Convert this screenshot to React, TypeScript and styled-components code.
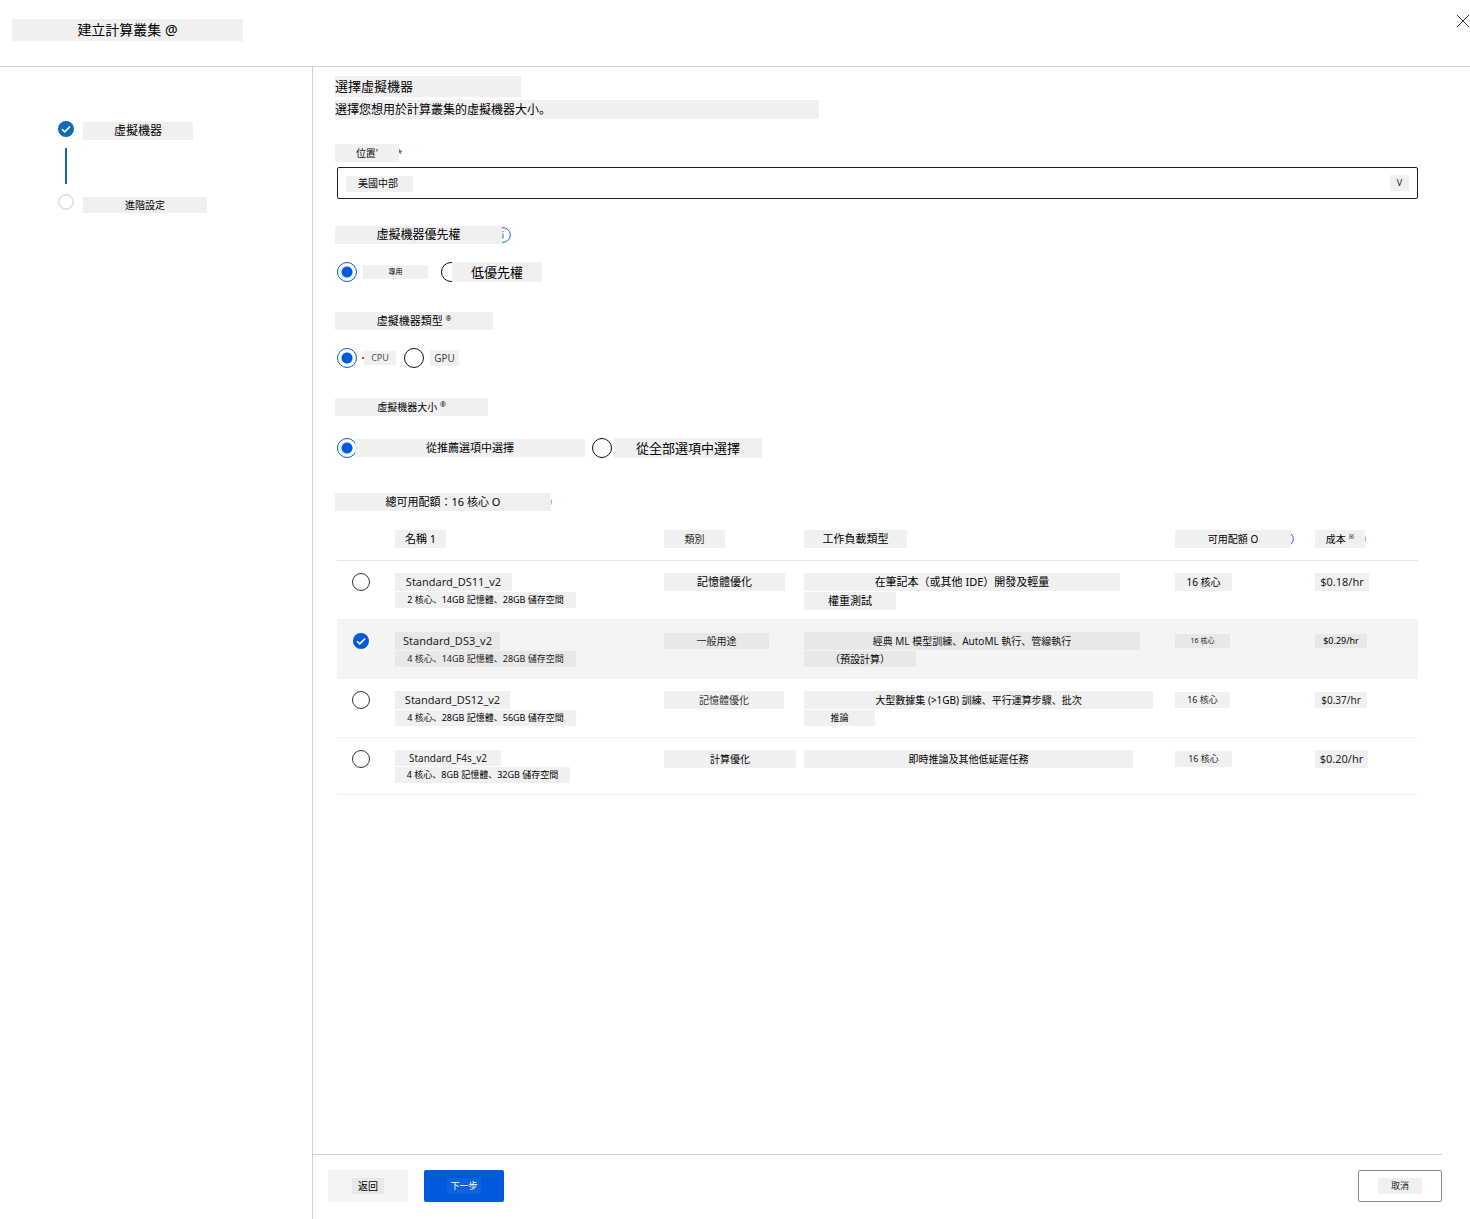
import React, { useState } from "react";
import styled, { createGlobalStyle } from "styled-components";

const Global = createGlobalStyle`
  *, *::before, *::after { box-sizing: border-box; }
  body {
    margin: 0;
    background: #fff;
    color: #000;
    font-family: "Noto Sans", "Noto Sans CJK JP", "Noto Sans CJK TC", sans-serif;
    font-size: 11px;
  }
  h1, h2, p { margin: 0; font-weight: 400; }
`;

const blue = "#005bdc";

const Page = styled.div`
  display: flex;
  flex-direction: column;
  min-height: 100vh;
`;

const Header = styled.header`
  display: flex;
  justify-content: space-between;
  align-items: flex-start;
  height: 67px;
  padding: 0 1px 0 12px;
  border-bottom: 1px solid #d2d2d2;
`;

const HeaderTitle = styled.h1`
  margin: 19px 0 0;
`;

const CloseButton = styled.button`
  display: flex;
  margin: 15px 0 0;
  padding: 0;
  border: 0;
  background: none;
  cursor: pointer;
`;

const Body = styled.div`
  flex: 1;
  display: grid;
  grid-template-columns: 313px minmax(0, 1fr);
`;

const Sidebar = styled.nav`
  border-right: 1px solid #d2d2d2;
  padding: 53px 0 0 58px;
`;

const Step = styled.div`
  display: grid;
  grid-template-columns: 16px auto;
  justify-content: start;
  align-items: end;
  gap: 9px;
  height: 20px;
`;

const StepIcon = styled.svg`
  width: 16px;
  height: 16px;
  margin-bottom: 3px;
`;

const StepLine = styled.div`
  width: 2px;
  height: 36px;
  margin: 8px 0 9px 7px;
  background: #1567a8;
`;

const Content = styled.div`
  display: flex;
  flex-direction: column;
`;

const Main = styled.main`
  flex: 1;
  padding: 9px 52px 24px 22px;
`;

type PlateProps = { $w: number; $h?: number; $size?: number; $tone?: string; $align?: string; $bg?: string };

const Plate = styled.span<PlateProps>`
  position: relative;
  display: block;
  flex: none;
  width: ${(p) => p.$w}px;
  height: ${(p) => p.$h ?? 18}px;
  line-height: ${(p) => p.$h ?? 18}px;
  font-size: ${(p) => p.$size ?? 11}px;
  color: ${(p) => p.$tone ?? "#000"};
  background: ${(p) => p.$bg ?? "#f0f0f0"};
  text-align: ${(p) => p.$align ?? "center"};
  white-space: nowrap;

  sup {
    font-size: 7px;
    line-height: 1;
    vertical-align: 4px;
  }
`;

const Intro = styled.div`
  display: grid;
  gap: 3px;
`;

const Line = styled.div`
  display: flex;
  align-items: center;
  min-height: 18px;
`;

const Field = styled.section<{ $top: number; $gap: number }>`
  display: grid;
  gap: ${(p) => p.$gap}px;
  margin-top: ${(p) => p.$top}px;
`;

const Required = styled.span`
  margin-left: -2px;
  color: #b3202c;
  font-size: 10px;
  line-height: 16px;
`;

const SelectBox = styled.div`
  display: grid;
  grid-template-columns: minmax(0, 1fr) 27px;
  align-items: center;
  height: 32px;
  margin-left: 2px;
  border: 1px solid #222;
  border-radius: 2px;
`;

const LocationSelect = styled.select`
  grid-area: 1 / 1 / 2 / 3;
  width: 100%;
  height: 30px;
  padding: 0 40px 0 20px;
  border: 0;
  appearance: none;
  background: linear-gradient(#f0f0f0, #f0f0f0) 8px 8px / 67px 16px no-repeat;
  color: #111;
  font-family: inherit;
  font-size: 10px;
`;

const Chevron = styled.div`
  grid-area: 1 / 2 / 2 / 3;
  pointer-events: none;
`;

const InfoIcon = styled.svg<{ $tuck: number; $color: string }>`
  flex: none;
  width: 16px;
  height: 16px;
  margin-left: -${(p) => p.$tuck}px;
  color: ${(p) => p.$color};
`;

const RadioRow = styled.div`
  display: flex;
  align-items: center;
  height: 20px;
  margin-left: 2px;
`;

const RadioLabel = styled.label<{ $gap: number; $after?: number }>`
  display: flex;
  align-items: center;
  margin-right: ${(p) => p.$after ?? 0}px;
  cursor: pointer;

  input { margin-right: ${(p) => p.$gap}px; }
`;

const Mark = styled.span`
  width: 2px;
  height: 2px;
  background: #c4502c;
`;

const Radio = styled.input`
  appearance: none;
  flex: none;
  width: 20px;
  height: 20px;
  margin: 0;
  border: 1px solid #111;
  border-radius: 50%;
  background: #fff;

  &:checked {
    border-color: ${blue};
    background: radial-gradient(circle, ${blue} 5px, #fff 6px);
  }
`;

const Table = styled.table`
  width: calc(100% - 2px);
  margin: 9px 0 0 2px;
  table-layout: fixed;
  border-collapse: separate;
  border-spacing: 0;
`;

const Th = styled.th`
  height: 40px;
  padding: 10px 0 0;
  vertical-align: top;
  text-align: left;
  font-weight: 400;
`;

const Row = styled.tr<{ $selected: boolean; $first: boolean }>`
  background: ${(p) => (p.$selected ? "#f4f4f4" : "transparent")};

  td {
    height: 59px;
    padding: 12px 0 0;
    vertical-align: top;
    border-top: 1px solid ${(p) => (p.$first ? "#e6e6e6" : "#f2f2f2")};
  }

  &:last-child td {
    height: 58px;
    border-bottom: 1px solid #efefef;
  }
`;

const Stack = styled.div`
  display: grid;
  gap: 1px;
`;

const Pick = styled.label`
  display: grid;
  width: 18px;
  height: 18px;
  margin-left: 15px;
  place-items: center;
  cursor: pointer;
`;

const RowRadio = styled.input`
  grid-area: 1 / 1;
  appearance: none;
  width: 18px;
  height: 18px;
  margin: 0;
  border: 1px solid #333;
  border-radius: 50%;

  &:checked { border-color: transparent; }
`;

const PickIcon = styled.svg`
  grid-area: 1 / 1;
  width: 16px;
  height: 16px;
  pointer-events: none;
`;

const Footer = styled.footer`
  display: flex;
  gap: 16px;
  height: 65px;
  margin-right: 28px;
  padding: 15px 0 0 15px;
  border-top: 1px solid #d2d2d2;
`;

const Button = styled.button<{ $kind: "plain" | "primary" | "outline" }>`
  display: flex;
  align-items: center;
  justify-content: center;
  width: ${(p) => (p.$kind === "outline" ? 84 : 80)}px;
  height: 32px;
  margin-left: ${(p) => (p.$kind === "outline" ? "auto" : "0")};
  padding: 0;
  border: ${(p) => (p.$kind === "outline" ? "1px solid #8a8a8a" : "0")};
  border-radius: 2px;
  background: ${(p) => (p.$kind === "primary" ? blue : p.$kind === "plain" ? "#f4f4f4" : "#fff")};
  font-family: inherit;
  cursor: pointer;
`;

function Info({ tuck, letter, color = "#2b62c4" }: { tuck: number; letter?: boolean; color?: string }) {
  return (
    <InfoIcon $tuck={tuck} $color={color} viewBox="0 0 16 16" fill="none" stroke="currentColor" aria-hidden="true">
      <circle cx="8" cy="8" r="7.3" />
      {letter && <path d="M8 6.6v5M8 4v1.3" />}
    </InfoIcon>
  );
}

function Check({ color }: { color: string }) {
  return (
    <>
      <circle cx="8" cy="8" r="8" fill={color} />
      <path d="M4 8.2l2.7 2.7 5.4-5.4" fill="none" stroke="#fff" strokeWidth="1.6" />
    </>
  );
}

type Text = { text: string; w: number; size: number; h?: number; tone?: string };

type Vm = { name: Text; spec: Text; category: Text; workload: Text[]; quota: Text; cost: Text };

const vms: Vm[] = [
  {
    name: { text: "Standard_DS11_v2", w: 117, size: 11, tone: "#222" },
    spec: { text: "2 核心、14GB 記憶體、28GB 儲存空間", w: 181, size: 9, h: 16 },
    category: { text: "記憶體優化", w: 121, size: 11 },
    workload: [
      { text: "在筆記本（或其他 IDE）開發及輕量", w: 316, size: 11 },
      { text: "權重測試", w: 92, size: 11 },
    ],
    quota: { text: "16 核心", w: 57, size: 10 },
    cost: { text: "$0.18/hr", w: 54, size: 11, tone: "#222" },
  },
  {
    name: { text: "Standard_DS3_v2", w: 105, size: 11, tone: "#222" },
    spec: { text: "4 核心、14GB 記憶體、28GB 儲存空間", w: 181, size: 9, h: 16, tone: "#222" },
    category: { text: "一般用途", w: 105, size: 10, h: 16, tone: "#222" },
    workload: [
      { text: "經典 ML 模型訓練、AutoML 執行、管線執行", w: 336, size: 10, tone: "#111" },
      { text: "（預設計算）", w: 112, size: 10, h: 16 },
    ],
    quota: { text: "16 核心", w: 55, size: 7, h: 14, tone: "#222" },
    cost: { text: "$0.29/hr", w: 52, size: 9, h: 14 },
  },
  {
    name: { text: "Standard_DS12_v2", w: 115, size: 11, tone: "#222" },
    spec: { text: "4 核心、28GB 記憶體、56GB 儲存空間", w: 181, size: 9, h: 16 },
    category: { text: "記憶體優化", w: 120, size: 10, tone: "#333" },
    workload: [
      { text: "大型數據集 (>1GB) 訓練、平行運算步驟、批次", w: 349, size: 10 },
      { text: "推論", w: 71, size: 9, h: 16 },
    ],
    quota: { text: "16 核心", w: 55, size: 9, h: 16, tone: "#222" },
    cost: { text: "$0.37/hr", w: 52, size: 10, h: 16, tone: "#222" },
  },
  {
    name: { text: "Standard_F4s_v2", w: 106, size: 10, h: 16, tone: "#222" },
    spec: { text: "4 核心、8GB 記憶體、32GB 儲存空間", w: 175, size: 9, h: 16 },
    category: { text: "計算優化", w: 132, size: 10 },
    workload: [{ text: "即時推論及其他低延遲任務", w: 329, size: 10 }],
    quota: { text: "16 核心", w: 57, size: 9, h: 16, tone: "#222" },
    cost: { text: "$0.20/hr", w: 53, size: 11, tone: "#222" },
  },
];

function Chip({ t, dark }: { t: Text; dark: boolean }) {
  return (
    <Plate $w={t.w} $h={t.h} $size={t.size} $tone={t.tone} $bg={dark ? "#e8e8e8" : undefined}>
      {t.text}
    </Plate>
  );
}

export default function App() {
  const [picked, setPicked] = useState(1);

  return (
    <>
      <Global />
      <Page>
        <Header>
          <HeaderTitle>
            <Plate $w={231} $h={22} $size={14}>建立計算叢集 @</Plate>
          </HeaderTitle>
          <CloseButton aria-label="關閉">
            <svg width="12" height="12" viewBox="0 0 12 12" stroke="#333" aria-hidden="true">
              <path d="M0 0l12 12M12 0L0 12" />
            </svg>
          </CloseButton>
        </Header>
        <Body>
          <Sidebar>
            <Step>
              <StepIcon viewBox="0 0 16 16"><Check color="#0f6cbd" /></StepIcon>
              <Plate $w={110} $size={12}>虛擬機器</Plate>
            </Step>
            <StepLine />
            <Step>
              <StepIcon viewBox="0 0 16 16">
                <circle cx="8" cy="8" r="7.2" fill="#fff" stroke="#dcdcdc" strokeWidth="1.5" />
              </StepIcon>
              <Plate $w={124} $h={16} $size={10}>進階設定</Plate>
            </Step>
          </Sidebar>
          <Content>
            <Main>
              <Intro>
                <Plate as="h2" $w={186} $h={21} $size={13} $align="left">選擇虛擬機器</Plate>
                <Plate as="p" $w={484} $h={19} $size={12} $align="left">選擇您想用於計算叢集的虛擬機器大小。</Plate>
              </Intro>

              <Field $top={25} $gap={5}>
                <Line>
                  <Plate as="label" htmlFor="location" $w={64} $size={10} $tone="#111">位置'</Plate>
                  <Required>*</Required>
                </Line>
                <SelectBox>
                  <LocationSelect id="location" defaultValue="central">
                    <option value="central">美國中部</option>
                  </LocationSelect>
                  <Chevron>
                    <Plate $w={19} $h={16} $size={9} $tone="#222">V</Plate>
                  </Chevron>
                </SelectBox>
              </Field>

              <Field $top={27} $gap={18} role="radiogroup" aria-labelledby="priority">
                <Line>
                  <Plate id="priority" $w={167} $size={12}>虛擬機器優先權</Plate>
                  <Info tuck={7} letter />
                </Line>
                <RadioRow>
                  <RadioLabel $gap={6} $after={13}>
                    <Radio type="radio" name="priority" defaultChecked />
                    <Plate $w={65} $h={14} $size={7}>專用</Plate>
                  </RadioLabel>
                  <RadioLabel $gap={-9}>
                    <Radio type="radio" name="priority" />
                    <Plate $w={90} $h={20} $size={13}>低優先權</Plate>
                  </RadioLabel>
                </RadioRow>
              </Field>

              <Field $top={30} $gap={18} role="radiogroup" aria-labelledby="type">
                <Plate id="type" $w={158} $size={11}>虛擬機器類型 <sup>®</sup></Plate>
                <RadioRow>
                  <RadioLabel $gap={5} $after={8}>
                    <Radio type="radio" name="type" defaultChecked />
                    <Mark />
                    <Plate $w={32} $h={14} $size={9} $tone="#555">CPU</Plate>
                  </RadioLabel>
                  <RadioLabel $gap={6}>
                    <Radio type="radio" name="type" />
                    <Plate $w={29} $h={16} $size={10} $tone="#444">GPU</Plate>
                  </RadioLabel>
                </RadioRow>
              </Field>

              <Field $top={30} $gap={22} role="radiogroup" aria-labelledby="size">
                <Plate id="size" $w={153} $size={10}>虛擬機器大小 <sup>®</sup></Plate>
                <RadioRow>
                  <RadioLabel $gap={-2} $after={7}>
                    <Radio type="radio" name="size" defaultChecked />
                    <Plate $w={230} $size={11}>從推薦選項中選擇</Plate>
                  </RadioLabel>
                  <RadioLabel $gap={2}>
                    <Radio type="radio" name="size" />
                    <Plate $w={148} $h={20} $size={13}>從全部選項中選擇</Plate>
                  </RadioLabel>
                </RadioRow>
              </Field>

              <Field $top={35} $gap={0}>
                <Line>
                  <Plate $w={216} $size={11}>總可用配額：16 核心 O</Plate>
                  <Info tuck={15} color="#2aa5e0" />
                </Line>
              </Field>

              <Table>
                <colgroup>
                  <col width="58" />
                  <col width="269" />
                  <col width="140" />
                  <col />
                  <col width="140" />
                  <col width="103" />
                </colgroup>
                <thead>
                  <tr>
                    <Th aria-label="選取" />
                    <Th><Plate $w={51}>名稱 1</Plate></Th>
                    <Th><Plate $w={61} $size={10} $tone="#222">類別</Plate></Th>
                    <Th><Plate $w={103}>工作負載類型</Plate></Th>
                    <Th>
                      <Line>
                        <Plate $w={116} $size={10}>可用配額 O</Plate>
                        <Info tuck={13} />
                      </Line>
                    </Th>
                    <Th>
                      <Line>
                        <Plate $w={50} $size={10}>成本 <sup>※</sup></Plate>
                        <Info tuck={15} color="#2aa5e0" />
                      </Line>
                    </Th>
                  </tr>
                </thead>
                <tbody>
                  {vms.map((vm, i) => {
                    const dark = i === picked;
                    return (
                      <Row key={vm.name.text} $selected={dark} $first={i === 0}>
                        <td>
                          <Pick>
                            <RowRadio
                              type="radio"
                              name="vm"
                              aria-label={vm.name.text}
                              checked={dark}
                              onChange={() => setPicked(i)}
                            />
                            {dark && <PickIcon viewBox="0 0 16 16"><Check color={blue} /></PickIcon>}
                          </Pick>
                        </td>
                        <td>
                          <Stack>
                            <Chip t={vm.name} dark={dark} />
                            <Chip t={vm.spec} dark={dark} />
                          </Stack>
                        </td>
                        <td><Line><Chip t={vm.category} dark={dark} /></Line></td>
                        <td>
                          <Stack>
                            {vm.workload.map((t) => <Chip key={t.text} t={t} dark={dark} />)}
                          </Stack>
                        </td>
                        <td><Line><Chip t={vm.quota} dark={dark} /></Line></td>
                        <td><Line><Chip t={vm.cost} dark={dark} /></Line></td>
                      </Row>
                    );
                  })}
                </tbody>
              </Table>
            </Main>
            <Footer>
              <Button $kind="plain">
                <Plate $w={32} $h={16} $size={10} $bg="#e8e8e8">返回</Plate>
              </Button>
              <Button $kind="primary">
                <Plate $w={34} $h={16} $size={9} $tone="#fff" $bg="#0f63dd">下一步</Plate>
              </Button>
              <Button $kind="outline">
                <Plate $w={44} $h={16} $size={9} $tone="#222">取消</Plate>
              </Button>
            </Footer>
          </Content>
        </Body>
      </Page>
    </>
  );
}
